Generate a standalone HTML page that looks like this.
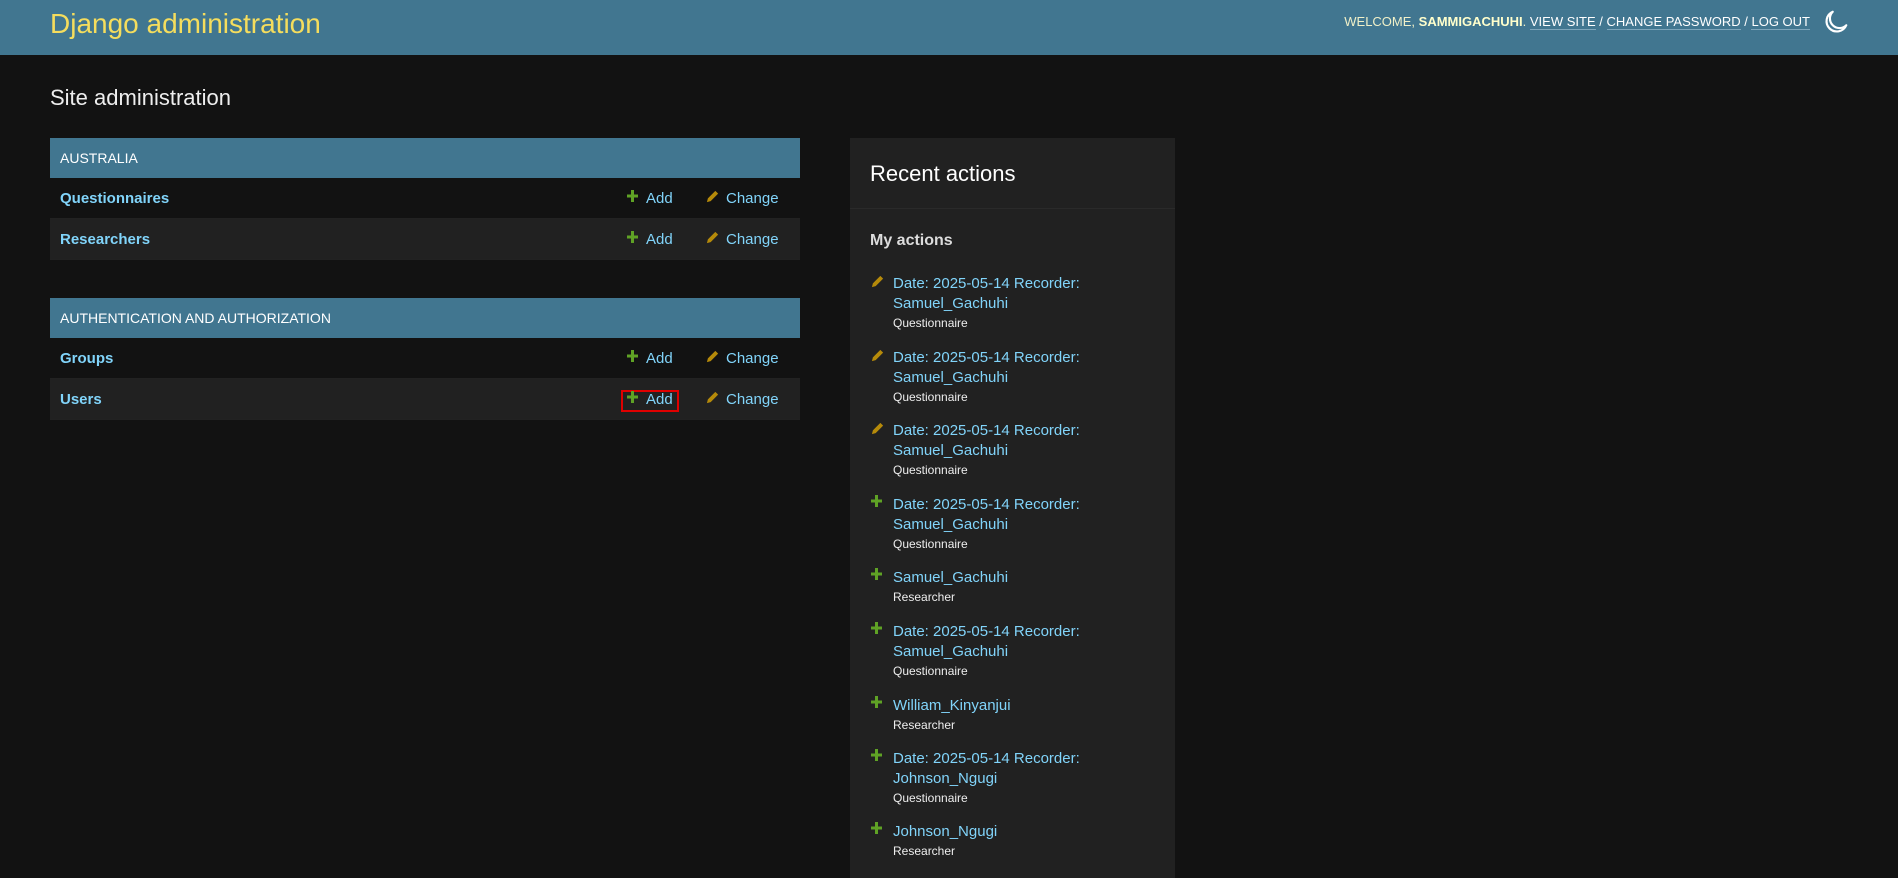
<!DOCTYPE html>
<html><head><meta charset="utf-8"><style>
*{margin:0;padding:0;box-sizing:border-box}
body{width:1898px;height:866px;background:#121212;font-family:"Liberation Sans",sans-serif;position:relative;overflow:hidden;color:#eee}
.hdr{position:absolute;left:0;top:0;width:1898px;height:55px;background:#417690}
.abs{position:absolute;white-space:nowrap}
.title{left:50px;top:8px;font-size:28px;color:#f5dd5d}
.user{right:88px;top:14px;font-size:13px;color:#f0f0c8;text-transform:uppercase}
.user b{color:#ffffcc;font-weight:bold}
.user a{color:#fff;text-decoration:none;border-bottom:1px solid #7ea6bb}
.user span{color:#fff}
h1{position:absolute;left:50px;top:85px;font-size:22px;font-weight:normal;color:#eee}
.cap{position:absolute;left:50px;width:750px;height:40px;background:#417690;color:#fff;font-size:14px;padding:12px 0 0 10px}
.row{position:absolute;left:50px;width:750px;height:41px;font-size:15px;border-bottom:1px solid #222}
.row.alt{background:#212121}
.row .n{position:absolute;left:10px;top:12px;color:#81d4fa;font-weight:bold}
.row .a{position:absolute;left:596px;top:12px;color:#81d4fa}
.row .c{position:absolute;left:676px;top:12px;color:#81d4fa}
.row svg{position:absolute}
.panel{position:absolute;left:850px;top:138px;width:325px;height:740px;background:#212121}
.panel .hr{position:absolute;left:0;top:70px;width:325px;height:1px;background:#2a2a2a}
.it{position:absolute;left:893px;font-size:15px;color:#81d4fa;line-height:20px}
.it small{display:block;font-size:12px;color:#eee;line-height:18px}
.ic{position:absolute;left:871px}
</style></head><body>
<div class="hdr"></div>
<div class="abs title">Django administration</div>
<div class="abs user">Welcome, <b>sammigachuhi</b>. <a>View site</a> <span>/</span> <a>Change password</a> <span>/</span> <a>Log out</a></div>
<svg class="abs" style="left:1823px;top:9px" width="26" height="26" viewBox="0 0 24 24"><path d="M9 2.5A9.5 9.5 0 1 0 21.5 15 8 8 0 0 1 9 2.5z" fill="none" stroke="#fff" stroke-width="2" stroke-linejoin="round"/></svg>
<h1>Site administration</h1>

<div class="cap" style="top:138px">AUSTRALIA</div>
<div class="row" style="top:178px"><span class="n">Questionnaires</span>
<svg style="left:577px;top:12px" width="11" height="12" viewBox="0 0 11 12"><path d="M4 0h3v4.5h4v3H7V12H4V7.5H0v-3h4z" fill="#5fa225"/></svg><span class="a">Add</span>
<svg style="left:656px;top:11px" width="14" height="14" viewBox="0 0 15 15"><path d="M1 14l1-4 8-8 3 3-8 8z" fill="#b58a0a"/></svg><span class="c">Change</span></div>
<div class="row alt" style="top:219px"><span class="n">Researchers</span>
<svg style="left:577px;top:12px" width="11" height="12" viewBox="0 0 11 12"><path d="M4 0h3v4.5h4v3H7V12H4V7.5H0v-3h4z" fill="#5fa225"/></svg><span class="a">Add</span>
<svg style="left:656px;top:11px" width="14" height="14" viewBox="0 0 15 15"><path d="M1 14l1-4 8-8 3 3-8 8z" fill="#b58a0a"/></svg><span class="c">Change</span></div>

<div class="cap" style="top:298px">AUTHENTICATION AND AUTHORIZATION</div>
<div class="row" style="top:338px"><span class="n">Groups</span>
<svg style="left:577px;top:12px" width="11" height="12" viewBox="0 0 11 12"><path d="M4 0h3v4.5h4v3H7V12H4V7.5H0v-3h4z" fill="#5fa225"/></svg><span class="a">Add</span>
<svg style="left:656px;top:11px" width="14" height="14" viewBox="0 0 15 15"><path d="M1 14l1-4 8-8 3 3-8 8z" fill="#b58a0a"/></svg><span class="c">Change</span></div>
<div class="row alt" style="top:379px"><span class="n">Users</span>
<div style="position:absolute;left:571px;top:11px;width:58px;height:22px;border:2px solid #e00000"></div>
<svg style="left:577px;top:12px" width="11" height="12" viewBox="0 0 11 12"><path d="M4 0h3v4.5h4v3H7V12H4V7.5H0v-3h4z" fill="#5fa225"/></svg><span class="a">Add</span>
<svg style="left:656px;top:11px" width="14" height="14" viewBox="0 0 15 15"><path d="M1 14l1-4 8-8 3 3-8 8z" fill="#b58a0a"/></svg><span class="c">Change</span></div>

<div class="panel"><div class="hr"></div></div>
<div class="abs" style="left:870px;top:161px;font-size:22px;color:#fff">Recent actions</div>
<div class="abs" style="left:870px;top:232px;font-size:16px;font-weight:bold;color:#ddd">My actions</div>

<svg class="ic" style="top:274px" width="14" height="14" viewBox="0 0 15 15"><path d="M1 14l1-4 8-8 3 3-8 8z" fill="#b58a0a"/></svg>
<div class="it" style="top:274px">Date: 2025-05-14 Recorder:<br>Samuel_Gachuhi<small>Questionnaire</small></div>
<svg class="ic" style="top:348px" width="14" height="14" viewBox="0 0 15 15"><path d="M1 14l1-4 8-8 3 3-8 8z" fill="#b58a0a"/></svg>
<div class="it" style="top:348px">Date: 2025-05-14 Recorder:<br>Samuel_Gachuhi<small>Questionnaire</small></div>
<svg class="ic" style="top:421px" width="14" height="14" viewBox="0 0 15 15"><path d="M1 14l1-4 8-8 3 3-8 8z" fill="#b58a0a"/></svg>
<div class="it" style="top:421px">Date: 2025-05-14 Recorder:<br>Samuel_Gachuhi<small>Questionnaire</small></div>
<svg class="ic" style="top:495px" width="11" height="12" viewBox="0 0 11 12"><path d="M4 0h3v4.5h4v3H7V12H4V7.5H0v-3h4z" fill="#5fa225"/></svg>
<div class="it" style="top:495px">Date: 2025-05-14 Recorder:<br>Samuel_Gachuhi<small>Questionnaire</small></div>
<svg class="ic" style="top:568px" width="11" height="12" viewBox="0 0 11 12"><path d="M4 0h3v4.5h4v3H7V12H4V7.5H0v-3h4z" fill="#5fa225"/></svg>
<div class="it" style="top:568px">Samuel_Gachuhi<small>Researcher</small></div>
<svg class="ic" style="top:622px" width="11" height="12" viewBox="0 0 11 12"><path d="M4 0h3v4.5h4v3H7V12H4V7.5H0v-3h4z" fill="#5fa225"/></svg>
<div class="it" style="top:622px">Date: 2025-05-14 Recorder:<br>Samuel_Gachuhi<small>Questionnaire</small></div>
<svg class="ic" style="top:696px" width="11" height="12" viewBox="0 0 11 12"><path d="M4 0h3v4.5h4v3H7V12H4V7.5H0v-3h4z" fill="#5fa225"/></svg>
<div class="it" style="top:696px">William_Kinyanjui<small>Researcher</small></div>
<svg class="ic" style="top:749px" width="11" height="12" viewBox="0 0 11 12"><path d="M4 0h3v4.5h4v3H7V12H4V7.5H0v-3h4z" fill="#5fa225"/></svg>
<div class="it" style="top:749px">Date: 2025-05-14 Recorder:<br>Johnson_Ngugi<small>Questionnaire</small></div>
<svg class="ic" style="top:822px" width="11" height="12" viewBox="0 0 11 12"><path d="M4 0h3v4.5h4v3H7V12H4V7.5H0v-3h4z" fill="#5fa225"/></svg>
<div class="it" style="top:822px">Johnson_Ngugi<small>Researcher</small></div>
</body></html>
